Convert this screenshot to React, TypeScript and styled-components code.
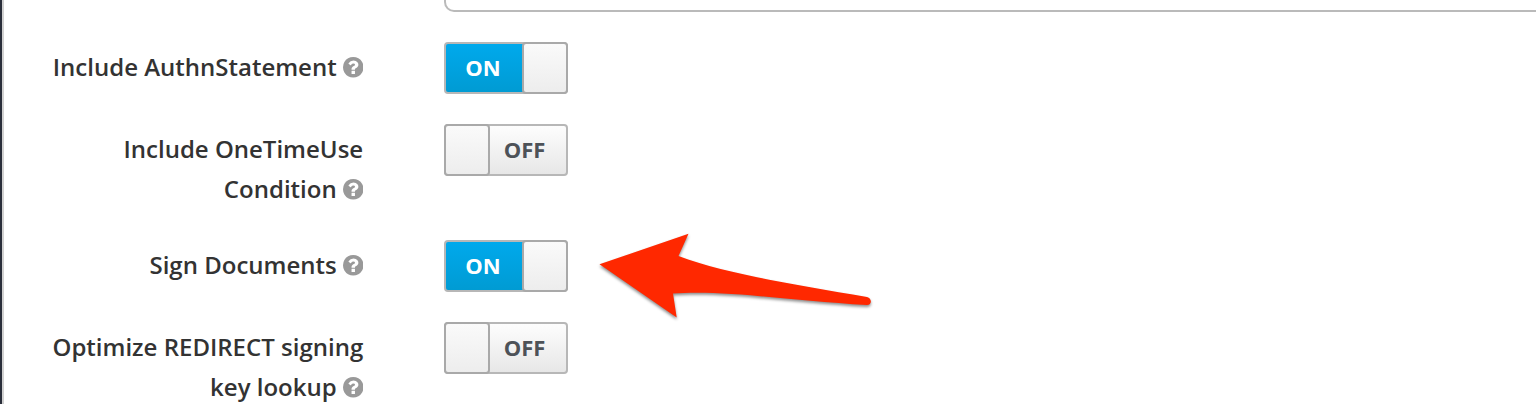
import React from 'react';
import styled, { createGlobalStyle } from 'styled-components';

const GlobalStyle = createGlobalStyle`
  *, *::before, *::after { box-sizing: border-box; }
  body { margin: 0; background: #fff; overflow: hidden; }
`;

const Page = styled.main`
  position: relative;
  width: 1536px;
  height: 404px;
  overflow: hidden;
  background: #fff;
  border-left: 2px solid #292e3a;
  box-shadow: inset 2px 0 0 #d1d1d1;
  font-family: 'Open Sans', sans-serif;
`;

const TextField = styled.div`
  height: 12px;
  margin-left: 442px;
  margin-right: -20px;
  border: 2px solid #bababa;
  border-top: 0;
  border-bottom-left-radius: 10px;
`;

const Form = styled.form`
  display: flex;
  flex-direction: column;
  gap: 30px;
  padding-top: 30px;
`;

const Row = styled.div`
  display: flex;
  align-items: flex-start;
  gap: 80.8px;
`;

const Label = styled.label`
  width: 361.2px;
  padding: 5px 0 1px;
  color: #333;
  font-size: 24px;
  font-weight: 600;
  line-height: 40px;
  text-align: right;
  white-space: nowrap;
`;

const HelpIcon = styled.svg`
  display: inline-block;
  width: 20.5px;
  height: 20.5px;
  margin-left: 6px;
  vertical-align: -1.8px;
  fill: #999;
`;

const Switch = styled.div<{ $on: boolean }>`
  display: flex;
  flex-direction: ${(p) => (p.$on ? 'row' : 'row-reverse')};
  width: 124px;
  height: 52px;
  border: 2px solid #b7b7b7;
  border-radius: 4px;
  background: ${(p) =>
    p.$on ? 'linear-gradient(#00a9ec, #009bd3)' : 'linear-gradient(#fdfdfd, #e7e7e7)'};
`;

const State = styled.span<{ $on: boolean }>`
  flex: 1;
  color: ${(p) => (p.$on ? '#fff' : '#4d5258')};
  font-size: 22px;
  font-weight: 700;
  line-height: 46px;
  text-align: center;
  padding-right: ${(p) => (p.$on ? '4px' : '5px')};
`;

const Handle = styled.span`
  width: 46px;
  height: 52px;
  margin: -2px;
  border: 2px solid #a9a9a9;
  border-radius: 4px;
  background: linear-gradient(#fafafa, #ededed);
`;

const Arrow = styled.svg`
  position: absolute;
  left: 588px;
  top: 224px;
  width: 300px;
  height: 110px;
  filter: drop-shadow(0 2px 1.5px rgba(0, 0, 0, 0.45));
`;

const Help = () => (
  <HelpIcon viewBox="128 128 1536 1536" aria-label="Help">
    <path d="M1024 1376v-192q0-14-9-23t-23-9h-192q-14 0-23 9t-9 23v192q0 14 9 23t23 9h192q14 0 23-9t9-23zm256-672q0-88-55.500-163t-138.500-116-170-41q-243 0-371 213-15 24 8 42l132 100q7 6 19 6 16 0 25-12 53-68 86-92 34-24 86-24 48 0 85.500 26t37.500 59q0 38-20 61t-68 45q-63 28-115.500 86.500t-52.500 125.500v36q0 14 9 23t23 9h192q14 0 23-9t9-23q0-19 21.500-49.500t54.500-49.500q32-18 49-28.500t46-35 44.500-48 28-60.500 12.500-81zm384 192q0 209-103 385.500t-279.500 279.500-385.500 103-385.500-103-279.500-279.500-103-385.500 103-385.500 279.500-279.500 385.500-103 385.500 103 279.500 279.500 103 385.500z" />
  </HelpIcon>
);

const settings = [
  { lines: ['Include AuthnStatement'], on: true },
  { lines: ['Include OneTimeUse', 'Condition'], on: false },
  { lines: ['Sign Documents'], on: true },
  { lines: ['Optimize REDIRECT signing', 'key lookup'], on: false },
];

export default function App() {
  return (
    <>
      <GlobalStyle />
      <Page>
        <TextField />
        <Form>
          {settings.map(({ lines, on }) => (
            <Row key={lines[0]}>
              <Label>
                {lines.map((line, i) => (
                  <React.Fragment key={line}>
                    {i > 0 && <br />}
                    {line}
                  </React.Fragment>
                ))}
                <Help />
              </Label>
              <Switch $on={on} role="switch" aria-checked={on}>
                <State $on={on}>{on ? 'ON' : 'OFF'}</State>
                <Handle />
              </Switch>
            </Row>
          ))}
        </Form>
        <Arrow viewBox="590 224 300 110" aria-hidden="true">
          <path
            d="M599.500 264.300L688.500 233.800L678.500 256C726 274 798 285 867 297C872.300 298.500 872 305 867 305C796 301 724 289.500 673 293.500L676.700 317.500Z"
            fill="#ff2800"
          />
        </Arrow>
      </Page>
    </>
  );
}
